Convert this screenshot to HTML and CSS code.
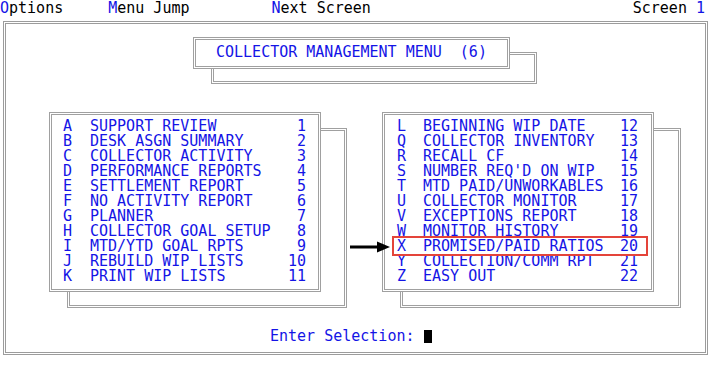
FILE: index.html
```html
<!DOCTYPE html>
<html>
<head>
    <meta charset="UTF-8">
    <meta name="viewport" content="width=device-width, initial-scale=1.0">
    <link rel="stylesheet" href="styles.css">
</head>
<body>
    <div class="topbar">
        <span class="opt"><span class="hot">O</span>ptions</span>
        <span class="opt opt-jump"><span class="hot">M</span>enu Jump</span>
        <span class="opt opt-next"><span class="hot">N</span>ext Screen</span>
        <span class="screen-no">Screen <span class="hot">1</span></span>
    </div>

    <div class="screen">
        <div class="boxed title-wrap">
            <div class="box title">COLLECTOR MANAGEMENT MENU  (6)</div>
        </div>

        <div class="menus">
            <div class="boxed">
                <div class="box menu-list">
                    <div class="item"><span class="key">A</span><span class="label">SUPPORT REVIEW</span><span class="num">1</span></div>
                    <div class="item"><span class="key">B</span><span class="label">DESK ASGN SUMMARY</span><span class="num">2</span></div>
                    <div class="item"><span class="key">C</span><span class="label">COLLECTOR ACTIVITY</span><span class="num">3</span></div>
                    <div class="item"><span class="key">D</span><span class="label">PERFORMANCE REPORTS</span><span class="num">4</span></div>
                    <div class="item"><span class="key">E</span><span class="label">SETTLEMENT REPORT</span><span class="num">5</span></div>
                    <div class="item"><span class="key">F</span><span class="label">NO ACTIVITY REPORT</span><span class="num">6</span></div>
                    <div class="item"><span class="key">G</span><span class="label">PLANNER</span><span class="num">7</span></div>
                    <div class="item"><span class="key">H</span><span class="label">COLLECTOR GOAL SETUP</span><span class="num">8</span></div>
                    <div class="item"><span class="key">I</span><span class="label">MTD/YTD GOAL RPTS</span><span class="num">9</span></div>
                    <div class="item"><span class="key">J</span><span class="label">REBUILD WIP LISTS</span><span class="num">10</span></div>
                    <div class="item"><span class="key">K</span><span class="label">PRINT WIP LISTS</span><span class="num">11</span></div>
                </div>
            </div>

            <div class="boxed boxed-right">
                <div class="box menu-list menu-right">
                    <div class="item"><span class="key">L</span><span class="label">BEGINNING WIP DATE</span><span class="num">12</span></div>
                    <div class="item"><span class="key">Q</span><span class="label">COLLECTOR INVENTORY</span><span class="num">13</span></div>
                    <div class="item"><span class="key">R</span><span class="label">RECALL CF</span><span class="num">14</span></div>
                    <div class="item"><span class="key">S</span><span class="label">NUMBER REQ'D ON WIP</span><span class="num">15</span></div>
                    <div class="item"><span class="key">T</span><span class="label">MTD PAID/UNWORKABLES</span><span class="num">16</span></div>
                    <div class="item"><span class="key">U</span><span class="label">COLLECTOR MONITOR</span><span class="num">17</span></div>
                    <div class="item"><span class="key">V</span><span class="label">EXCEPTIONS REPORT</span><span class="num">18</span></div>
                    <div class="item"><span class="key">W</span><span class="label">MONITOR HISTORY</span><span class="num">19</span></div>
                    <div class="item picked"><span class="key">X</span><span class="label">PROMISED/PAID RATIOS</span><span class="num">20</span></div>
                    <div class="item"><span class="key">Y</span><span class="label">COLLECTION/COMM RPT</span><span class="num">21</span></div>
                    <div class="item"><span class="key">Z</span><span class="label">EASY OUT</span><span class="num">22</span></div>
                </div>
            </div>

            <svg class="arrow" width="41" height="12" viewBox="0 0 41 12">
                <rect x="0" y="4.5" width="29" height="3" fill="#000"/>
                <polygon points="27,0.5 40,6 27,11.5" fill="#000"/>
            </svg>
        </div>

        <div class="prompt">Enter Selection: <span class="cursor"></span></div>
    </div>
</body>
</html>
```

FILE: styles.css
```css
* {
    margin: 0;
    padding: 0;
    box-sizing: border-box;
}

body {
    background: #fff;
    color: #000;
    font-family: 'DejaVu Sans Mono', 'Liberation Mono', monospace;
    font-size: 15px;
    line-height: 15px;
}

.topbar {
    display: flex;
    height: 16px;
    padding-top: 1px;
    white-space: pre;
}

.hot {
    color: #1414e6;
}

.opt-jump {
    margin-left: 45px;
}

.opt-next {
    margin-left: 82px;
}

.screen-no {
    margin-left: auto;
    padding-right: 11px;
}

.screen {
    margin: 5px 0 0 3px;
    width: 705px;
    height: 334px;
    border: 3px double #9c9c9c;
    color: #1414e6;
}

.boxed {
    position: relative;
}

.boxed::before {
    content: "";
    position: absolute;
    left: 18px;
    top: 16px;
    right: -26px;
    bottom: -16px;
    border: 3px double #a0a0a0;
}

.box {
    position: relative;
    background: #fff;
    border: 3px double #a0a0a0;
}

.title-wrap {
    width: fit-content;
    margin: 13px 0 0 187px;
}

.title-wrap::before {
    top: 15px;
    right: -27px;
    bottom: -15px;
}

.title {
    height: 32px;
    padding: 0 20px;
    line-height: 25px;
    white-space: pre;
}

.menus {
    position: relative;
    display: flex;
    gap: 61px;
    margin-top: 43px;
    padding-left: 43px;
}

.boxed-right::before {
    right: -27px;
}

.menu-list {
    width: 272px;
    height: 180px;
    padding: 4px 12px 5px 11px;
}

.menu-right {
    padding: 4px 13px 5px 12px;
}

.item {
    display: grid;
    grid-template-columns: 27px 1fr auto;
    height: 15px;
    white-space: pre;
}

.menu-right .item {
    grid-template-columns: 26px 1fr auto;
}

.num {
    text-align: right;
}

.item.picked {
    position: relative;
}

.item.picked::after {
    content: "";
    position: absolute;
    left: -5px;
    right: -10px;
    top: -3px;
    bottom: -2px;
    border: 2px solid #e4443a;
}

.arrow {
    position: absolute;
    left: 344px;
    top: 129px;
}

.prompt {
    margin-top: 37px;
    padding-left: 264px;
    white-space: pre;
}

.cursor {
    display: inline-block;
    width: 8px;
    height: 13px;
    background: #000;
    vertical-align: -2px;
}
```
